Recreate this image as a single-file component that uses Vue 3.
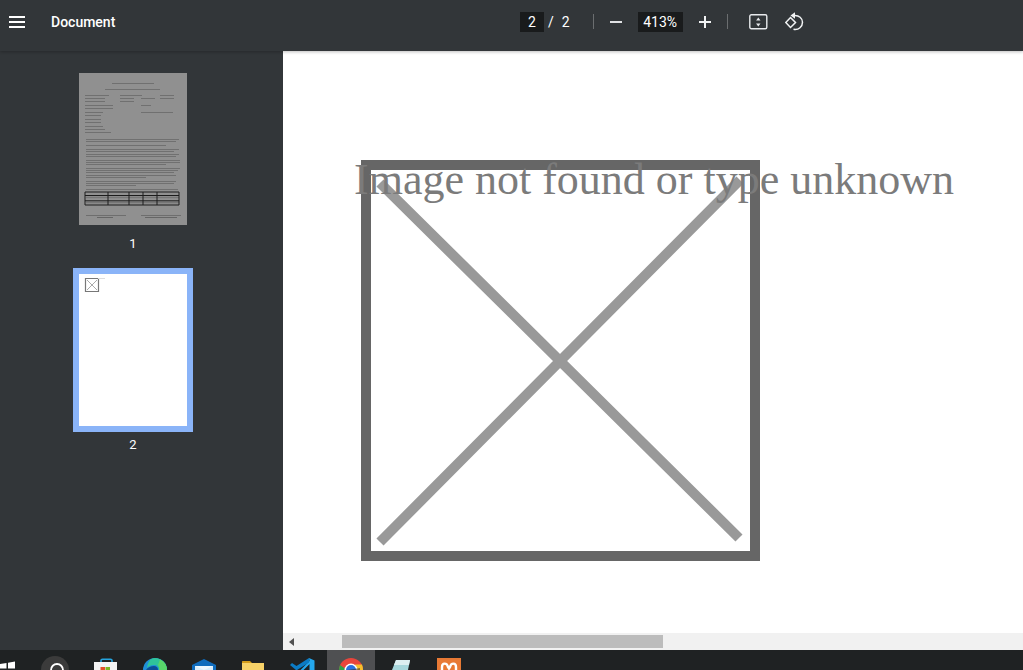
<script setup>
// thumbnail text lines: x, y, width
const thumbLines = [
  [33, 10, 42], [26, 16, 55],
  [6, 22, 24], [41, 22, 22], [81, 22, 14],
  [6, 25, 20], [41, 25, 14], [62, 25, 14], [81, 25, 14],
  [6, 28, 20], [41, 28, 14],
  [6, 32, 28], [62, 32, 10], [6, 35, 28],
  [6, 39, 18], [62, 39, 32], [6, 42, 16],
  [6, 46, 16], [6, 49, 16], [6, 53, 18], [6, 56, 20], [6, 59, 26],
  [7, 66, 93], [7, 68, 90], [7, 72, 80],
  [7, 76, 93], [7, 78, 88], [7, 81, 93], [7, 83, 90],
  [7, 87, 94], [7, 89, 94], [7, 91, 80],
  [7, 95, 94], [7, 97, 92], [7, 99, 88], [7, 102, 90], [7, 104, 60],
  [7, 108, 90], [7, 110, 88], [7, 112, 50], [7, 116, 92]
]

const pageTools = [
  { left: 520, text: '2' },
  { left: 561, text: '2' }
]
</script>

<template>
  <div class="app">
    <header class="toolbar">
      <div class="title-group">
        <svg class="menu" width="16" height="12" viewBox="0 0 16 12">
          <path d="M0 1h16M0 6h16M0 11h16" stroke="#fff" stroke-width="2" fill="none" />
        </svg>
        <span class="title">Document</span>
      </div>
      <div class="controls">
        <span class="box page-box">{{ pageTools[0].text }}</span>
        <span class="slash">/</span>
        <span class="page-total">{{ pageTools[1].text }}</span>
        <span class="sep sep-first"></span>
        <svg class="minus" width="14" height="14" viewBox="0 0 14 14">
          <path d="M1 7h12" stroke="#e0e2e4" stroke-width="2" />
        </svg>
        <span class="box zoom-box">413%</span>
        <svg class="plus" width="14" height="14" viewBox="0 0 14 14">
          <path d="M1 7h12M7 1v12" stroke="#f1f3f4" stroke-width="2" />
        </svg>
        <span class="sep sep-second"></span>
        <svg class="fit" width="19" height="16" viewBox="0 0 19 16">
          <rect x="0.800" y="0.800" width="17" height="14" rx="1.500" stroke="#e8eaed" stroke-width="1.400" fill="none" />
          <path d="M9.300 3.500 11.500 6.500H7.100zM9.300 12.500 7.100 9.500h4.400z" fill="#e8eaed" />
        </svg>
        <svg class="rotate" width="20" height="20" viewBox="0 0 20 20">
          <path d="M5.500 5.500 10.500 10.500 5.500 15.500 0.800 10.500z" stroke="#f1f3f4" stroke-width="1.500" fill="none" />
          <path d="M9 3.500c5-.5 8.500 2.800 8.500 6.800 0 4.200-3.700 8-9 7" stroke="#f1f3f4" stroke-width="1.500" fill="none" />
          <path d="M10 0.300v6.400L5.500 3.500z" fill="#f1f3f4" />
        </svg>
      </div>
    </header>

    <div class="workspace">
      <aside class="sidebar">
        <figure class="thumb">
          <svg class="thumb-page" width="108" height="152" viewBox="0 0 108 152">
            <rect width="108" height="152" fill="#909090" />
            <g class="thumb-text">
              <rect
                v-for="(line, i) in thumbLines"
                :key="i"
                :x="line[0]"
                :y="line[1]"
                :width="line[2]"
                height="1"
                fill="#707070"
              />
              <path d="M18 144.500h16M66 144.500h32" stroke="#666" stroke-width="1" />
              <path d="M7 142.500h40M62 142.500h40" stroke="#666" stroke-width="0.800" />
              <path d="M7 124.500h93M7 129.500h93" stroke="#777" stroke-width="1.500" />
            </g>
            <path d="M6 119h94v13H6zM6 122.500h94M6 127.800h94M29 119v13M50 119v13M64 119v13M78 119v13" stroke="#1c1c1c" stroke-width="1" fill="none" />
          </svg>
          <figcaption>1</figcaption>
        </figure>
        <figure class="thumb thumb-active">
          <div class="selected-frame">
            <svg class="thumb-page" width="108" height="152" viewBox="0 0 108 152">
              <rect width="108" height="152" fill="#fff" />
              <path d="M6.500 4.500h13v13h-13z" stroke="#777" stroke-width="1.200" fill="none" />
              <path d="M8 6l10 10M18 6 8 16" stroke="#aaa" stroke-width="1" />
              <path d="M19 4.500h7" stroke="#ddd" stroke-width="1" />
            </svg>
          </div>
          <figcaption>2</figcaption>
        </figure>
      </aside>

      <main class="viewer">
        <div class="page-scroll">
          <svg class="missing" width="399" height="401" viewBox="0 0 399 401">
            <rect x="5" y="5" width="389" height="391" stroke="#666" stroke-width="10" fill="none" />
            <path d="M19 23 378 378M19 382 379 20" stroke="#999" stroke-width="10" fill="none" />
          </svg>
          <span class="missing-text">Image not found or type unknown</span>
        </div>
        <div class="scrollbar">
          <svg class="arrow" width="5" height="8" viewBox="0 0 5 8">
            <path d="M5 0v8L0 4z" fill="#505050" />
          </svg>
          <div class="scroll-thumb"></div>
        </div>
      </main>
    </div>

    <footer class="taskbar">
      <svg class="task-svg" width="480" height="20" viewBox="0 0 480 20">
        <!-- windows logo -->
        <path d="M0 14 6.500 13v5.500H0zM8 12.700 15 11.500v7H8z" fill="#fff" />
        <!-- search -->
        <circle cx="55" cy="20" r="14" fill="#3b3b3b" />
        <circle cx="57" cy="20" r="6" stroke="#fff" stroke-width="1.800" fill="none" />
        <!-- store -->
        <path d="M101 13v-2.500c0-.8.700-1.300 1.500-1.300h8c.8 0 1.500.5 1.500 1.300V13" stroke="#25a5e0" stroke-width="1.600" fill="none" />
        <rect x="94" y="12" width="23" height="8" fill="#f3f3f3" />
        <rect x="100.500" y="17" width="4.500" height="3" fill="#e3502a" />
        <rect x="105.500" y="17" width="4.500" height="3" fill="#7bb71f" />
        <!-- edge -->
        <circle cx="155" cy="20" r="12" fill="#1f8fd8" />
        <path d="M155 8a12 12 0 0 1 12 12h-8c0-3-2-5-5-5-3 0-5 1-7 3 1-6 3-10 8-10z" fill="#2fc49a" />
        <path d="M160 9.500a12 12 0 0 1 7 10.500h-8c0-2 0-4-1-5z" fill="#58d66a" />
        <path d="M146 20c2-3 5-4 8-4 2 0 4 1 4 4z" fill="#0c4f96" />
        <!-- mail -->
        <path d="M192 15 204 9l12 6v5h-24z" fill="#0f6cbd" />
        <path d="M195 16h18v4h-18z" fill="#d9eefc" />
        <path d="M195 16h18l-9 4z" fill="#eef8fe" />
        <!-- folder -->
        <path d="M242 13v-1c0-.6.400-1 1-1h7l2 2z" fill="#d39c1a" />
        <rect x="242" y="13" width="22" height="7" fill="#f7d268" />
        <!-- vs code -->
        <path d="M309 8l5.500 2.500V20h-5v-6l-6 6h-3l9-9z" fill="#24a8ee" />
        <path d="M290 15l2-2 4.500 3L309 8v4.500L297 20h-1z" fill="#0b7bc4" />
        <!-- chrome button -->
        <rect x="327" y="0" width="48" height="20" fill="#4f5052" />
        <path d="M339 20a12 12 0 0 1 24 0z" fill="#e8453c" />
        <path d="M340 15A12 12 0 0 0 339 20h8z" fill="#2fa24a" />
        <path d="M355 14.500h7a12 12 0 0 1 1 5.500h-6z" fill="#f6c02c" />
        <circle cx="351" cy="20" r="6.500" fill="#fff" />
        <circle cx="351" cy="20" r="5" fill="#2a72e0" />
        <path d="M347 20h13v-2z" fill="#333" opacity="0.600" />
        <!-- notepad -->
        <path d="M396 10h14l-2 10h-16z" fill="#a6d7dc" />
        <path d="M396 10h14l-1 5h-15z" fill="#dceff1" />
        <!-- xampp -->
        <rect x="437" y="8" width="24" height="12" fill="#e87a35" />
        <path d="M442 20v-3c0-4.500 5-4.500 6 0l1 1.500 1-1.500c1-4.500 6-4.500 6 0v3" stroke="#fff" stroke-width="2.400" fill="none" />
      </svg>
    </footer>
  </div>
</template>

<style scoped>
.app {
  display: flex;
  flex-direction: column;
  width: 1023px;
  height: 670px;
  overflow: hidden;
  font-family: Roboto, "Liberation Sans", sans-serif;
  color: #fff;
}
.toolbar {
  position: relative;
  z-index: 2;
  display: flex;
  align-items: center;
  flex: 0 0 51px;
  height: 51px;
  padding-bottom: 8px;
  box-sizing: border-box;
  background: #323639;
  box-shadow: 0 1px 3px rgba(0, 0, 0, 0.25);
}
.title-group {
  display: flex;
  align-items: center;
  width: 520px;
  padding-left: 9px;
  box-sizing: border-box;
}
.title {
  margin-left: 26px;
  font-size: 14px;
  font-weight: 500;
}
.controls {
  display: flex;
  align-items: center;
  font-size: 14px;
}
.box {
  display: flex;
  align-items: center;
  justify-content: center;
  height: 20px;
  background: #191b1c;
}
.page-box {
  width: 24px;
}
.slash {
  margin-left: 4px;
}
.page-total {
  margin-left: 8px;
}
.sep {
  width: 1px;
  height: 15px;
  background: #6b6e70;
}
.sep-first {
  margin-left: 23px;
}
.minus {
  margin-left: 15px;
}
.zoom-box {
  width: 45px;
  margin-left: 15px;
}
.plus {
  margin-left: 15px;
}
.sep-second {
  margin-left: 15px;
}
.fit {
  margin-left: 21px;
}
.rotate {
  margin-left: 17px;
}
.workspace {
  display: flex;
  flex: 1;
  min-height: 0;
}
.sidebar {
  display: flex;
  flex-direction: column;
  align-items: center;
  flex: 0 0 283px;
  padding: 22px 17px 0 0;
  box-sizing: border-box;
  background: #323639;
}
.thumb {
  display: flex;
  flex-direction: column;
  align-items: center;
  margin: 0;
}
.thumb-active {
  margin-top: 17px;
}
.thumb-page {
  display: block;
}
.thumb-text {
  filter: blur(0.6px);
}
.selected-frame {
  border: 6px solid #8ab4f8;
}
.thumb figcaption {
  margin-top: 11px;
  font-size: 13px;
  line-height: 15px;
}
.thumb-active figcaption {
  margin-top: 5px;
}
.viewer {
  display: flex;
  flex-direction: column;
  flex: 1;
  background: #fff;
}
.page-scroll {
  position: relative;
  flex: 1;
  padding: 109px 0 0 78px;
  overflow: hidden;
}
.missing {
  display: block;
}
.missing-text {
  position: absolute;
  left: 71px;
  top: 103px;
  font-family: "Liberation Serif", serif;
  font-size: 44px;
  line-height: 52px;
  white-space: nowrap;
  color: #7b7b7b;
}
.scrollbar {
  display: flex;
  align-items: center;
  flex: 0 0 17px;
  background: #f1f1f1;
}
.arrow {
  margin-left: 6px;
}
.scroll-thumb {
  width: 321px;
  height: 13px;
  margin-left: 48px;
  background: #bcbcbc;
}
.taskbar {
  flex: 0 0 20px;
  height: 20px;
  background: #1f2223;
}
.task-svg {
  display: block;
}
</style>

<style>
html,
body {
  margin: 0;
  background: #1f2223;
}
</style>
